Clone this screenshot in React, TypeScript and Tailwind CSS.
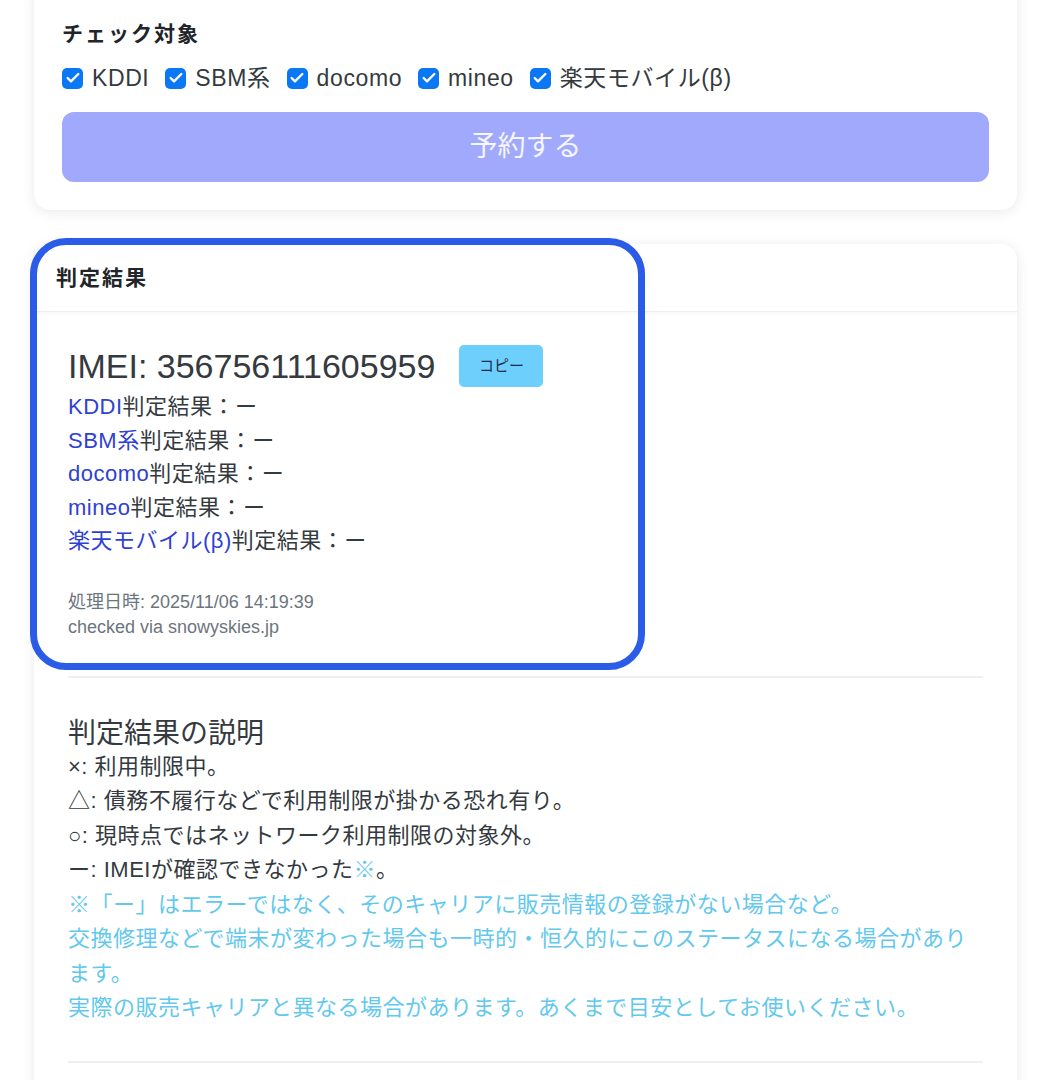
import { Check } from 'lucide-react'

const carriers = ['KDDI', 'SBM系', 'docomo', 'mineo', '楽天モバイル(β)']

function CheckItem({ label }: { label: string }) {
  return (
    <label className="flex items-center gap-[9px]">
      <span className="flex h-[21px] w-[21px] items-center justify-center rounded-[5px] bg-[#0a78f5]">
        <Check size={16} strokeWidth={3.5} className="text-white" />
      </span>
      <span>{label}</span>
    </label>
  )
}

export default function App() {
  return (
    <div
      className="min-h-screen bg-white px-[34px] text-[#212529]"
      style={{ fontFamily: '"Liberation Sans", "Noto Sans CJK JP", sans-serif' }}
    >
      {/* Reservation card */}
      <div className="-mt-[20px] rounded-[16px] bg-white px-[28px] pb-[28px] pt-[39px] shadow-[0_2px_14px_rgba(0,0,0,0.09)]">
        <h3 className="text-[21px] font-bold leading-[30px] tracking-[2px]">チェック対象</h3>
        <div className="mt-[14px] flex items-center gap-[16px] text-[23px] leading-[30px] tracking-[0.6px] text-[#343a40]">
          {carriers.map((c) => (
            <CheckItem key={c} label={c} />
          ))}
        </div>
        <button className="mt-[19px] flex h-[70px] w-full items-center justify-center rounded-[12px] bg-[#a0a9fb] text-[28px] text-white/90">
          予約する
        </button>
      </div>

      {/* Result card */}
      <div className="relative mt-[34px] rounded-t-[16px] bg-white shadow-[0_2px_14px_rgba(0,0,0,0.09)]">
        <div className="flex h-[68px] items-center border-b border-[#eceef0] px-[22px] shadow-[0_2px_4px_rgba(0,0,0,0.03)]">
          <h2 className="text-[21px] font-semibold tracking-[2px]">判定結果</h2>
        </div>

        <div className="px-[34px] pt-[30px]">
          <div className="flex items-center gap-[24px]">
            <span className="text-[34px] leading-[48px] text-[#343a40]">IMEI: 356756111605959</span>
            <button className="h-[42px] w-[84px] rounded-[5px] bg-[#6ccffc] text-[15px] text-[#1d2a4a]">
              コピー
            </button>
          </div>
          <div className="text-[22px] leading-[33.5px] tracking-[0.5px] text-[#343a40]">
            {carriers.map((c) => (
              <div key={c}>
                <span className="text-[#2f41d3]">{c}</span>判定結果：ー
              </div>
            ))}
          </div>
          <div className="mt-[32px] text-[18px] leading-[25px] text-[#6c757d]">
            <div>処理日時: 2025/11/06 14:19:39</div>
            <div>checked via snowyskies.jp</div>
          </div>

          <hr className="mt-[36px] border-t-[2px] border-[#eef0f2]" />

          <div className="pt-[40px]">
            <h3 className="text-[28px] leading-[32px] text-[#343a40]">判定結果の説明</h3>
            <div className="text-[22px] leading-[34.5px] tracking-[0.5px] text-[#343a40]">
              <div>×: 利用制限中。</div>
              <div>△: 債務不履行などで利用制限が掛かる恐れ有り。</div>
              <div>○: 現時点ではネットワーク利用制限の対象外。</div>
              <div>
                ー: IMEIが確認できなかった<span className="text-[#63c8ee]">※</span>。
              </div>
              <div className="text-[#63c8ee]">
                <div>※「ー」はエラーではなく、そのキャリアに販売情報の登録がない場合など。</div>
                <div>交換修理などで端末が変わった場合も一時的・恒久的にこのステータスになる場合があります。</div>
                <div>実際の販売キャリアと異なる場合があります。あくまで目安としてお使いください。</div>
              </div>
            </div>
          </div>

          <hr className="mt-[35px] border-t-[2px] border-[#eef0f2]" />
          <div className="h-[40px]" />
        </div>

        {/* Highlight annotation */}
        <div className="pointer-events-none absolute left-[-4px] top-[-6px] h-[432px] w-[615px] rounded-[36px] border-[7px] border-[#2b5ce8]" />
      </div>
    </div>
  )
}
